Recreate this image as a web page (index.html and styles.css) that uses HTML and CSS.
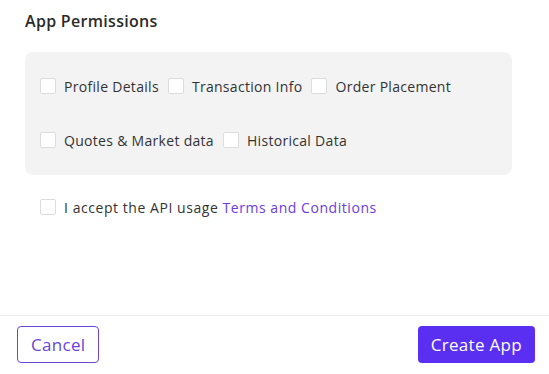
FILE: index.html
```html
<!DOCTYPE html>
<html lang="en">
<head>
    <meta charset="UTF-8">
    <meta name="viewport" content="width=device-width, initial-scale=1.0">
    <title>Create App - Permissions</title>
    <link rel="stylesheet" href="styles.css">
</head>
<body>
    <div class="modal">
        <div class="modal-body">
            <h2 class="section-title">App Permissions</h2>

            <!-- permission options -->
            <div class="permissions-box">
                <div class="perm-row">
                    <label class="check-item"><input type="checkbox"><span class="box"></span>Profile Details</label>
                    <label class="check-item"><input type="checkbox"><span class="box"></span>Transaction Info</label>
                    <label class="check-item"><input type="checkbox"><span class="box"></span>Order Placement</label>
                </div>
                <div class="perm-row">
                    <label class="check-item"><input type="checkbox"><span class="box"></span>Quotes &amp; Market data</label>
                    <label class="check-item"><input type="checkbox"><span class="box"></span>Historical Data</label>
                </div>
            </div>

            <div class="terms-row">
                <label class="check-item"><input type="checkbox"><span class="box"></span>I accept the API usage&nbsp;<a href="#">Terms and Conditions</a></label>
            </div>
        </div>

        <div class="modal-footer">
            <button type="button" class="btn btn-outline">Cancel</button>
            <button type="submit" class="btn btn-primary">Create App</button>
        </div>
    </div>
</body>
</html>
```

FILE: styles.css
```css
body {
    margin: 0;
    font-family: 'Open Sans', 'Noto Sans', sans-serif;
    background-color: #fff;
    color: #333;
}

.modal {
    display: flex;
    flex-direction: column;
    height: 100vh;
}

.modal-body {
    padding: 10px 37px 0 25px;
}

.section-title {
    margin: 0 0 20px;
    font-size: 16px;
    line-height: 22px;
    font-weight: 600;
    letter-spacing: 0.3px;
    color: #2b2b2b;
}

.permissions-box {
    background-color: #f3f3f3;
    border-radius: 8px;
    padding: 24px 15px 25px;
    display: flex;
    flex-direction: column;
    gap: 34px;
}

.perm-row {
    display: flex;
    gap: 9px;
}

.check-item {
    display: flex;
    align-items: center;
    height: 20px;
    font-size: 14px;
    letter-spacing: 0.3px;
    color: #333;
    white-space: nowrap;
    cursor: pointer;
}

.check-item input {
    display: none;
}

.check-item .box {
    width: 14px;
    height: 14px;
    border: 1px solid #dcdcdc;
    border-radius: 2px;
    background-color: #fff;
    margin-right: 8px;
    flex-shrink: 0;
}

.check-item input:checked + .box {
    background-color: #5a2ff2;
    border-color: #5a2ff2;
}

.terms-row {
    margin-top: 22px;
    padding-left: 15px;
}

.terms-row .check-item {
    letter-spacing: 0.55px;
}

.terms-row a {
    color: #6a3de0;
    text-decoration: none;
}

.terms-row a:hover {
    text-decoration: underline;
}

.modal-footer {
    margin-top: auto;
    border-top: 1px solid #ececec;
    padding: 10px 14px 11px 17px;
    display: flex;
    justify-content: space-between;
}

.btn {
    height: 37px;
    padding: 0 13px;
    border-radius: 4px;
    font-family: inherit;
    font-size: 17px;
    letter-spacing: 0.3px;
    cursor: pointer;
}

.btn-outline {
    background-color: #fff;
    color: #6a45d6;
    border: 1px solid #6a45d6;
}

.btn-primary {
    background-color: #5a2ff2;
    color: #fff;
    border: none;
}

.btn-primary:hover {
    background-color: #4a22d6;
}
```
